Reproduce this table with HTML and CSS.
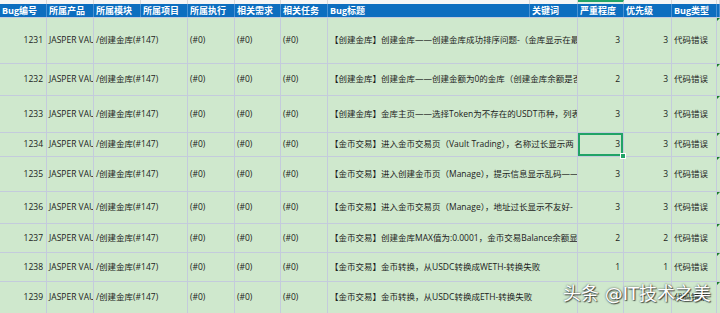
FILE: index.html
```html
<!DOCTYPE html>
<html lang="zh">
<head>
<meta charset="utf-8">
<link rel="stylesheet" href="styles.css">
</head>
<body>
<div class="sheet">
  <div class="strip">
    <span></span><span></span><span></span><span></span><span></span><span></span><span></span><span></span><span></span><span class="sel"></span><span></span><span></span><span></span>
  </div>
  <div class="head">
    <div>Bug编号</div><div>所属产品</div><div>所属模块</div><div>所属项目</div><div>所属执行</div><div>相关需求</div><div>相关任务</div><div>Bug标题</div><div class="kw">关键词</div><div>严重程度</div><div>优先级</div><div>Bug类型</div><div></div>
  </div>

  <div class="row h1">
    <div class="num">1231</div><div>JASPER VAU</div><div>/创建金库(#147)</div><div>(#0)</div><div>(#0)</div><div>(#0)</div>
    <div>【创建金库】创建金库——创建金库成功排序问题-（金库显示在最</div>
    <div class="num">3</div><div class="num">3</div><div>代码错误</div><div class="mark"></div>
  </div>
  <div class="row h2">
    <div class="num">1232</div><div>JASPER VAU</div><div>/创建金库(#147)</div><div>(#0)</div><div>(#0)</div><div>(#0)</div>
    <div>【创建金库】创建金库——创建金额为0的金库（创建金库余额是否</div>
    <div class="num">2</div><div class="num">3</div><div>代码错误</div><div class="mark"></div>
  </div>
  <div class="row h3">
    <div class="num">1233</div><div>JASPER VAU</div><div>/创建金库(#147)</div><div>(#0)</div><div>(#0)</div><div>(#0)</div>
    <div>【创建金库】金库主页——选择Token为不存在的USDT币种，列表</div>
    <div class="num">3</div><div class="num">3</div><div>代码错误</div><div class="mark"></div>
  </div>
  <div class="row h4">
    <div class="num">1234</div><div>JASPER VAU</div><div>/创建金库(#147)</div><div>(#0)</div><div>(#0)</div><div>(#0)</div>
    <div>【金币交易】进入金币交易页（Vault Trading），名称过长显示两</div>
    <div class="num active">3</div><div class="num">3</div><div>代码错误</div><div class="mark"></div>
  </div>
  <div class="row h5">
    <div class="num">1235</div><div>JASPER VAU</div><div>/创建金库(#147)</div><div>(#0)</div><div>(#0)</div><div>(#0)</div>
    <div>【金币交易】进入创建金币页（Manage），提示信息显示乱码——</div>
    <div class="num">3</div><div class="num">3</div><div>代码错误</div><div class="mark"></div>
  </div>
  <div class="row h6">
    <div class="num">1236</div><div>JASPER VAU</div><div>/创建金库(#147)</div><div>(#0)</div><div>(#0)</div><div>(#0)</div>
    <div>【金币交易】进入金币交易页（Manage），地址过长显示不友好-</div>
    <div class="num">3</div><div class="num">3</div><div>代码错误</div><div class="mark"></div>
  </div>
  <div class="row h7">
    <div class="num">1237</div><div>JASPER VAU</div><div>/创建金库(#147)</div><div>(#0)</div><div>(#0)</div><div>(#0)</div>
    <div>【金币交易】创建金库MAX值为:0.0001，金币交易Balance余额显</div>
    <div class="num">2</div><div class="num">2</div><div>代码错误</div><div class="mark"></div>
  </div>
  <div class="row h8">
    <div class="num">1238</div><div>JASPER VAU</div><div>/创建金库(#147)</div><div>(#0)</div><div>(#0)</div><div>(#0)</div>
    <div>【金币交易】金币转换，从USDC转换成WETH-转换失败</div>
    <div class="num">1</div><div class="num">1</div><div>代码错误</div><div class="mark"></div>
  </div>
  <div class="row h9">
    <div class="num">1239</div><div>JASPER VAU</div><div>/创建金库(#147)</div><div>(#0)</div><div>(#0)</div><div>(#0)</div>
    <div>【金币交易】金币转换，从USDC转换成ETH-转换失败</div>
    <div class="num">1</div><div class="num">1</div><div>代码错误</div><div class="mark"></div>
  </div>

  <div class="watermark">头条 @IT技术之美</div>
</div>
</body>
</html>
```

FILE: styles.css
```css
html, body {
  margin: 0;
  padding: 0;
  background: #cfe8cd;
}
.sheet {
  position: relative;
  width: 720px;
  height: 313px;
  overflow: hidden;
  font-family: "Open Sans", "Noto Sans CJK SC", sans-serif;
  font-size: 8.5px;
  color: #1c1c1c;
}
.strip, .head {
  display: grid;
  grid-template-columns: 47px 47px 47px 47px 47px 46px 47px 202px 48px 46px 48px 45px 1fr;
}
.strip {
  height: 4px;
  background: #f5f5f5;
}
.strip span {
  border-right: 1px solid #d8d8d8;
}
.strip span.sel {
  border-top: 2px solid #21a366;
  background: #e4efe7;
}
.head {
  height: 14px;
  background: #0d6ebf;
  color: #ffffff;
  font-weight: bold;
  font-size: 9px;
  border-bottom: 1px solid #c4cbdc;
  box-sizing: border-box;
}
.head div {
  display: flex;
  align-items: center;
  padding-left: 2px;
  border-right: 1px solid #4b92d2;
  white-space: nowrap;
  overflow: hidden;
  line-height: 1;
}
.row {
  display: grid;
  grid-template-columns: 47px 47px 94px 47px 46px 47px 250px 46px 48px 45px 1fr;
  border-bottom: 1px solid #c4cbdc;
  box-sizing: border-box;
}
.row div {
  position: relative;
  display: flex;
  align-items: center;
  padding: 0 2px 0 2px;
  border-right: 1px solid #c4cbdc;
  white-space: nowrap;
  overflow: hidden;
  line-height: 1;
}
.row div.num {
  justify-content: flex-end;
  padding-right: 3px;
}
.row div.active {
  overflow: visible;
  box-shadow: inset 0 0 0 2px #21a366;
}
.row div.active::after {
  content: "";
  position: absolute;
  right: -3px;
  bottom: -3px;
  width: 4px;
  height: 4px;
  background: #21a366;
  border: 1px solid #ffffff;
  z-index: 2;
}
.row div.mark::before {
  content: "";
  position: absolute;
  left: 0;
  top: 0;
  border-top: 3px solid #1a7f2a;
  border-right: 3px solid transparent;
}
.h1 { height: 46px; }
.h2 { height: 32px; }
.h3 { height: 37px; }
.h4 { height: 24px; }
.h5 { height: 35px; }
.h6 { height: 32px; }
.h7 { height: 29px; }
.h8 { height: 29px; }
.h9 { height: 32px; }
.watermark {
  position: absolute;
  right: 9px;
  bottom: 10px;
  font-family: "DejaVu Sans", "Noto Sans CJK SC", sans-serif;
  font-size: 18px;
  line-height: 1;
  color: #ffffff;
  text-shadow: 0 0 2px rgba(0,0,0,0.7), 1px 1px 1px rgba(0,0,0,0.6);
  white-space: nowrap;
}
```
